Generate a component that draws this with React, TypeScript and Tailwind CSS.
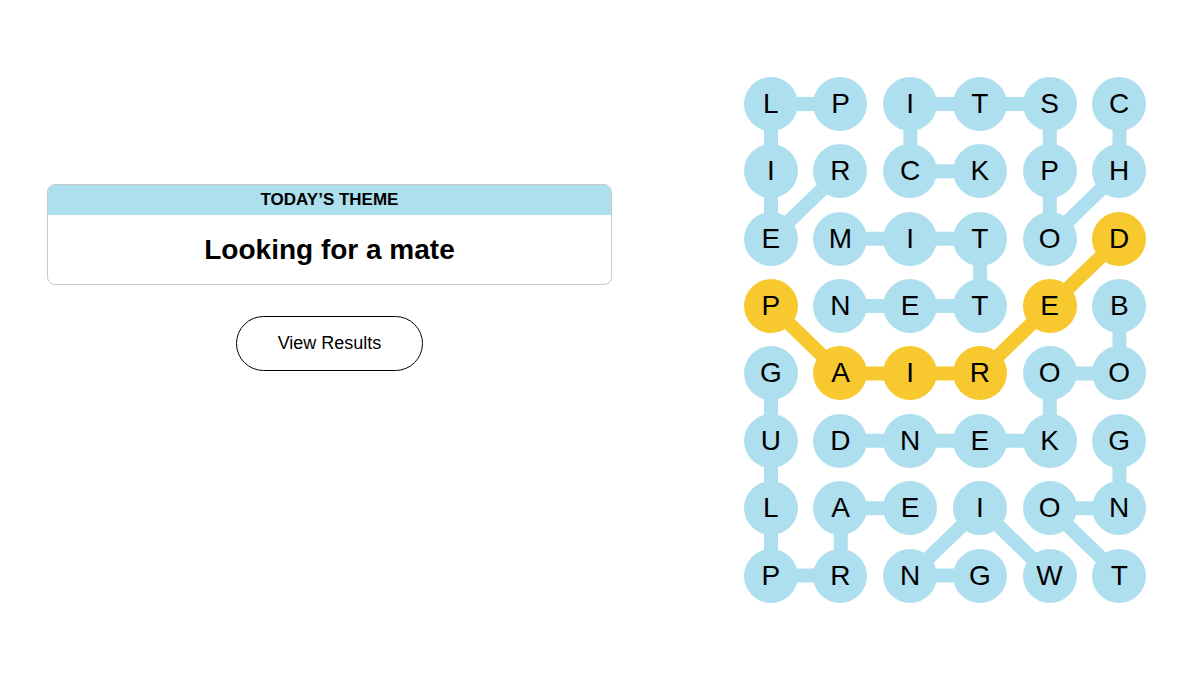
const letters = ['LPITSC', 'IRCKPH', 'EMITOD', 'PNETEB', 'GAIROO', 'UDNEKG', 'LAEION', 'PRNGWT'];

// cells of the spangram
const spangram = [[3, 0], [4, 1], [4, 2], [4, 3], [3, 4], [2, 5]];

// [row1, col1, row2, col2]
const blueLinks = [
  [0, 0, 0, 1], [0, 0, 1, 0], [1, 0, 2, 0], [2, 0, 1, 1],
  [0, 2, 0, 3], [0, 3, 0, 4], [0, 2, 1, 2], [1, 2, 1, 3],
  [0, 4, 1, 4], [1, 4, 2, 4], [0, 5, 1, 5], [1, 5, 2, 4],
  [2, 1, 2, 2], [2, 2, 2, 3], [2, 3, 3, 3], [3, 1, 3, 2], [3, 2, 3, 3],
  [3, 5, 4, 5], [4, 4, 4, 5], [4, 4, 5, 4],
  [4, 0, 5, 0], [5, 0, 6, 0], [6, 0, 7, 0], [7, 0, 7, 1], [7, 1, 6, 1], [6, 1, 6, 2],
  [5, 1, 5, 2], [5, 2, 5, 3], [5, 3, 5, 4],
  [5, 5, 6, 5], [6, 4, 6, 5], [6, 4, 7, 5],
  [6, 3, 7, 4], [6, 3, 7, 2], [7, 2, 7, 3],
];

const COL = 69.7;
const ROW = 67.36;
const R = 27;
const cx = (c: number) => R + c * COL;
const cy = (r: number) => R + r * ROW;

const isSpan = (r: number, c: number) => spangram.some(([a, b]) => a === r && b === c);

const Board = () => {
  const w = R * 2 + COL * 5;
  const h = R * 2 + ROW * 7;
  return (
    <div className="relative">
      <svg className="absolute inset-0" width={w} height={h}>
        {blueLinks.map(([r1, c1, r2, c2], i) => (
          <line key={i} x1={cx(c1)} y1={cy(r1)} x2={cx(c2)} y2={cy(r2)} stroke="#aedfee" strokeWidth={14} />
        ))}
        {spangram.slice(1).map(([r, c], i) => {
          const [pr, pc] = spangram[i];
          return <line key={i} x1={cx(pc)} y1={cy(pr)} x2={cx(c)} y2={cy(r)} stroke="#f7c92f" strokeWidth={14} />;
        })}
      </svg>
      <div className="relative grid grid-cols-[repeat(6,54px)] gap-x-[15.7px] gap-y-[13.36px]">
        {letters.map((row, r) =>
          row.split('').map((ch, c) => (
            <div
              key={`${r}-${c}`}
              className={`w-[54px] h-[54px] rounded-full flex items-center justify-center text-[28px] leading-none text-black ${
                isSpan(r, c) ? 'bg-[#f7c92f]' : 'bg-[#aedfee]'
              }`}
            >
              {ch}
            </div>
          ))
        )}
      </div>
    </div>
  );
};

export default function App() {
  return (
    <div className="w-[1200px] h-[675px] bg-white flex font-['Liberation_Sans',Arial,sans-serif] text-black">
      {/* Theme + results */}
      <div className="w-[565px] ml-[47px] pt-[184px] flex flex-col items-center">
        <div className="w-full border border-[#c8c8c8] rounded-lg overflow-hidden">
          <div className="h-[30px] bg-[#aedfee] flex items-center justify-center text-[17px] font-bold">
            TODAY’S THEME
          </div>
          <div className="h-[69px] flex items-center justify-center text-[28px] font-bold">
            Looking for a mate
          </div>
        </div>
        <button className="mt-[31px] w-[187px] h-[55px] rounded-full border border-black bg-white text-[18px]">
          View Results
        </button>
      </div>

      {/* Board */}
      <div className="ml-[131.8px] mt-[77px]">
        <Board />
      </div>
    </div>
  );
}
